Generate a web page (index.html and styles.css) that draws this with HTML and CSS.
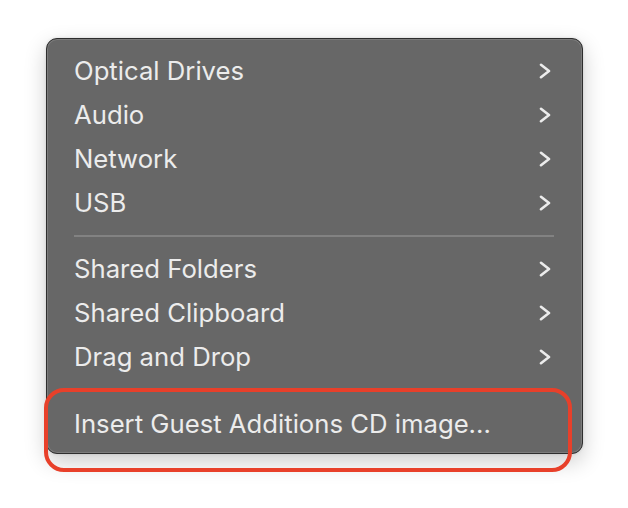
FILE: index.html
```html
<!DOCTYPE html>
<html>
<head>
<meta charset="utf-8">
<link rel="stylesheet" href="styles.css">
</head>
<body>
<div class="stage">
  <div class="menu">
    <div class="item"><span>Optical Drives</span><svg class="chev" viewBox="0 0 12 16"><path d="M2 1.8 L10 8 L2 14.2"/></svg></div>
    <div class="item"><span>Audio</span><svg class="chev" viewBox="0 0 12 16"><path d="M2 1.8 L10 8 L2 14.2"/></svg></div>
    <div class="item"><span>Network</span><svg class="chev" viewBox="0 0 12 16"><path d="M2 1.8 L10 8 L2 14.2"/></svg></div>
    <div class="item"><span>USB</span><svg class="chev" viewBox="0 0 12 16"><path d="M2 1.8 L10 8 L2 14.2"/></svg></div>
    <div class="sep"></div>
    <div class="item"><span>Shared Folders</span><svg class="chev" viewBox="0 0 12 16"><path d="M2 1.8 L10 8 L2 14.2"/></svg></div>
    <div class="item"><span>Shared Clipboard</span><svg class="chev" viewBox="0 0 12 16"><path d="M2 1.8 L10 8 L2 14.2"/></svg></div>
    <div class="item"><span>Drag and Drop</span><svg class="chev" viewBox="0 0 12 16"><path d="M2 1.8 L10 8 L2 14.2"/></svg></div>
    <div class="sep sep-hidden"></div>
    <div class="item"><span>Insert Guest Additions CD image...</span></div>
  </div>
  <div class="highlight"></div>
</div>
</body>
</html>
```
FILE: styles.css
```css
html, body {
  margin: 0;
  padding: 0;
  background: #ffffff;
}
.stage {
  position: relative;
  width: 628px;
  height: 508px;
  padding: 38px 0 0 46px;
  box-sizing: border-box;
}
.menu {
  width: 537px;
  height: 416px;
  box-sizing: border-box;
  background: #676767;
  border: 1px solid #2e2e2e;
  border-radius: 11px;
  box-shadow: inset 0 0 0 1px #7c7c7c, 0 8px 22px rgba(0,0,0,0.2), 0 0 3px rgba(0,0,0,0.12);
  padding: 10px 31px 0 27px;
  font-family: Inter, "Noto Sans", sans-serif;
  font-size: 25.7px;
  color: #ececec;
}
.item {
  height: 44px;
  display: flex;
  align-items: center;
  justify-content: space-between;
}
.item span {
  padding-bottom: 2px;
}
.chev {
  width: 12px;
  height: 16px;
}
.chev path {
  fill: none;
  stroke: #ececec;
  stroke-width: 2.6;
  stroke-linecap: round;
  stroke-linejoin: round;
}
.sep {
  height: 2px;
  background: #828282;
  margin: 10px -3px 10px 0;
}
.sep-hidden {
  margin: 10px 0 11px 0;
}
.highlight {
  position: absolute;
  left: 44px;
  top: 388px;
  width: 528px;
  height: 84px;
  box-sizing: border-box;
  border: 4px solid #e8402a;
  border-radius: 20px;
}
```
